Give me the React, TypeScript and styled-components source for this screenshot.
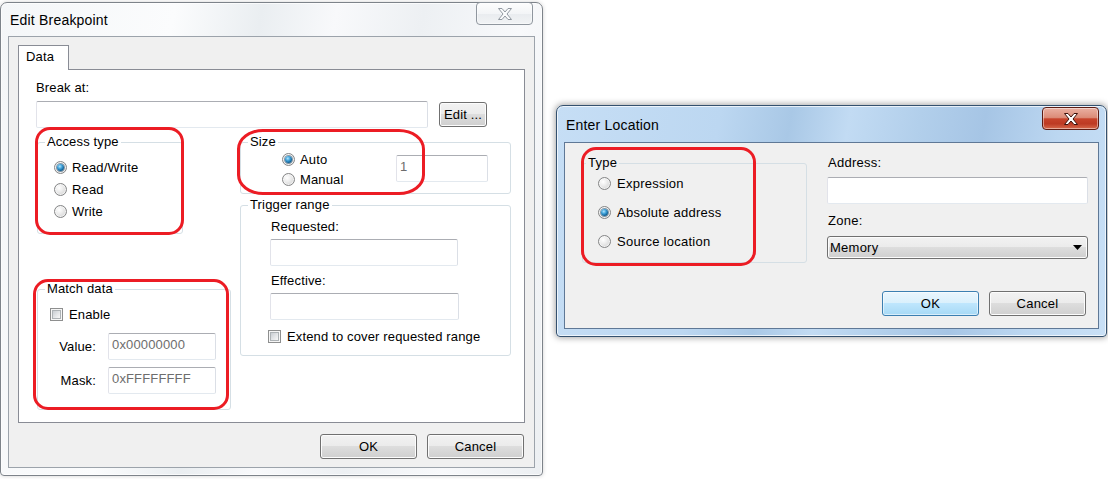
import React from "react";
import styled, { createGlobalStyle, css } from "styled-components";

const GlobalStyle = createGlobalStyle`
  html, body { margin: 0; padding: 0; background: #ffffff; }
  body { font-family: "Liberation Sans", Arial, sans-serif; font-size: 13px; color: #000; }
  * { box-sizing: border-box; }
`;

const Page = styled.div`
  display: flex;
  align-items: flex-start;
  gap: 13px;
  padding-top: 2px;
  width: 1108px;
  height: 479px;
  overflow: hidden;
`;

const Window = styled.section<{ $active?: boolean; $width: number; $height: number; $offsetTop?: number }>`
  width: ${(p) => p.$width}px;
  height: ${(p) => p.$height}px;
  margin-top: ${(p) => p.$offsetTop ?? 0}px;
  display: flex;
  flex-direction: column;
  padding: 0 7px 7px;
  border-radius: 7px 7px 4px 4px;
  border: 1px solid ${(p) => (p.$active ? "#34516f" : "#7d838a")};
  background: ${(p) =>
    p.$active
      ? "linear-gradient(100deg, #c6def5 0%, #bcd7f1 28%, #a9c8e6 40%, #c2dbf3 50%, #b2cfeb 62%, #a6c5e5 73%, #bcd7f1 86%, #c9e0f6 100%)"
      : "linear-gradient(100deg, #f4f6f8 0%, #fbfcfd 28%, #eaeef1 42%, #f8f9fb 54%, #edf0f3 68%, #f8f9fb 84%, #eceff2 100%)"};
  box-shadow: inset 0 0 0 1px rgba(255, 255, 255, 0.7),
    ${(p) => (p.$active ? "0 0 6px 1px rgba(0,0,0,0.35)" : "0 0 4px rgba(0,0,0,0.18)")};
`;

const TitleBar = styled.header<{ $height: number }>`
  height: ${(p) => p.$height}px;
  flex: none;
  display: flex;
  align-items: flex-start;
  justify-content: space-between;
`;

const TitleText = styled.span<{ $top: number }>`
  margin-top: ${(p) => p.$top}px;
  padding-left: 2px;
  font-size: 14px;
  line-height: 18px;
  letter-spacing: 0.2px;
  color: #000;
`;

const CloseButton = styled.div<{ $active?: boolean; $top: number; $right: number }>`
  width: 57px;
  height: 23px;
  margin-top: ${(p) => p.$top}px;
  margin-right: ${(p) => p.$right}px;
  display: flex;
  align-items: center;
  justify-content: center;
  border-radius: 4px;
  border: 1px solid ${(p) => (p.$active ? "#5e1c13" : "#8f969e")};
  background: ${(p) =>
    p.$active
      ? "linear-gradient(#eab0a2 0%, #dc8c78 45%, #c7432b 52%, #bd3a24 75%, #d76a4c 100%)"
      : "linear-gradient(#fdfdfd 0%, #f3f5f7 50%, #e9ecef 52%, #f1f3f5 100%)"};
  box-shadow: inset 0 0 0 1px rgba(255, 255, 255, 0.45);
`;

const XGlyph = ({ active }: { active?: boolean }) => (
  <svg width="16" height="14" viewBox="0 0 16 14">
    <path
      d="M1.5 1.5 H5 L8 5 L11 1.5 H14.5 L10 7 L14.5 12.5 H11 L8 9 L5 12.5 H1.5 L6 7 Z"
      fill={active ? "#ffffff" : "#fafbfc"}
      stroke={active ? "#3d120b" : "#9299a1"}
      strokeWidth="1"
      strokeLinejoin="round"
    />
  </svg>
);

const Client = styled.div<{ $active?: boolean; $tracking: number; $pad: string }>`
  flex: 1;
  min-height: 0;
  display: flex;
  flex-direction: column;
  background: #f0f0f0;
  border: 1px solid ${(p) => (p.$active ? "#5f7896" : "#9ca3ab")};
  padding: ${(p) => p.$pad};
  letter-spacing: ${(p) => p.$tracking}px;
`;

/* ---------- Tabs ---------- */
const TabStrip = styled.div`
  display: flex;
  height: 24px;
  flex: none;
  position: relative;
  z-index: 1;
`;

const Tab = styled.div`
  width: 51px;
  height: 25px;
  padding: 3px 0 0 7px;
  line-height: 16px;
  background: #ffffff;
  border: 1px solid #898c95;
  border-bottom: none;
`;

const TabPanel = styled.div`
  flex: 1;
  background: #ffffff;
  border: 1px solid #898c95;
  padding: 10px 14px 0 17px;
`;

/* ---------- Common controls ---------- */
const FieldLabel = styled.div<{ $gap?: number; $indent?: number }>`
  line-height: 16px;
  margin-bottom: ${(p) => p.$gap ?? 0}px;
  margin-left: ${(p) => p.$indent ?? 0}px;
  white-space: nowrap;
`;

const TextBox = styled.input<{ $w: number; $h?: number }>`
  display: block;
  width: ${(p) => p.$w}px;
  height: ${(p) => p.$h ?? 27}px;
  margin: 0;
  padding: 0 3px 4px;
  font: inherit;
  font-size: 13px;
  letter-spacing: inherit;
  color: #6d6d6d;
  background: #ffffff;
  border: 1px solid;
  border-color: #abadb3 #dbdfe6 #e3e9ef #e2e3ea;
  border-radius: 2px;
  outline: none;
`;

const PushButton = styled.button<{ $w: number; $h?: number; $default?: boolean }>`
  width: ${(p) => p.$w}px;
  height: ${(p) => p.$h ?? 25}px;
  margin: 0;
  padding: 0;
  font: inherit;
  font-size: 13px;
  letter-spacing: inherit;
  color: #000;
  border-radius: 3px;
  border: 1px solid ${(p) => (p.$default ? "#3c7fb1" : "#707070")};
  background: ${(p) =>
    p.$default
      ? "linear-gradient(#eaf6fd 0%, #d9f0fc 49%, #bee6fd 50%, #a7d9f5 100%)"
      : "linear-gradient(#f2f2f2 0%, #ebebeb 49%, #dddddd 50%, #cfcfcf 100%)"};
  box-shadow: inset 0 0 0 1px ${(p) => (p.$default ? "rgba(255,255,255,0.55)" : "#fcfcfc")};
`;

const ButtonRow = styled.div<{ $top: number; $right?: number }>`
  display: flex;
  justify-content: flex-end;
  gap: 10px;
  flex: none;
  margin-top: ${(p) => p.$top}px;
  margin-right: ${(p) => p.$right ?? 0}px;
`;

const Group = styled.fieldset<{ $w: number; $h: number }>`
  width: ${(p) => p.$w}px;
  height: ${(p) => p.$h}px;
  margin: 0;
  padding: 0;
  min-width: 0;
  border: 1px solid #d5dfe5;
  border-radius: 3px;
`;

const GroupTitle = styled.legend<{ $indent: number }>`
  margin-left: ${(p) => p.$indent}px;
  padding: 0 2px;
  line-height: 16px;
  font-size: 13px;
`;

const GroupBody = styled.div<{ $pad: string; $gap?: number }>`
  display: flex;
  flex-direction: column;
  padding: ${(p) => p.$pad};
  gap: ${(p) => p.$gap ?? 0}px;
`;

const Annotated = styled.div`
  position: relative;
  width: fit-content;
`;

const Highlight = styled.div<{ $t: number; $l: number; $r: number; $b: number; $radius: string }>`
  position: absolute;
  top: ${(p) => p.$t}px;
  left: ${(p) => p.$l}px;
  right: ${(p) => p.$r}px;
  bottom: ${(p) => p.$b}px;
  border: 3px solid #ec1c24;
  border-radius: ${(p) => p.$radius};
  pointer-events: none;
  z-index: 2;
`;

const Option = styled.div<{ $h: number; $gap?: number }>`
  display: flex;
  align-items: center;
  height: ${(p) => p.$h}px;
  gap: ${(p) => p.$gap ?? 5}px;
  white-space: nowrap;
`;

const RadioDot = styled.span<{ $checked?: boolean }>`
  flex: none;
  width: 13px;
  height: 13px;
  border-radius: 50%;
  border: 1px solid #848586;
  background: radial-gradient(circle at 38% 35%, #ffffff 0%, #eeeeee 35%, #cacaca 100%);
  box-shadow: inset 0 0 0 1px rgba(255, 255, 255, 0.6);
  display: inline-flex;
  align-items: center;
  justify-content: center;
  ${(p) =>
    p.$checked &&
    css`
      &::after {
        content: "";
        width: 7px;
        height: 7px;
        border-radius: 50%;
        background: radial-gradient(circle at 40% 35%, #b2e6fd 0%, #42a3da 35%, #0f5f94 70%, #0b3a5a 100%);
        box-shadow: 0 0 0 1px rgba(30, 70, 100, 0.5);
      }
    `}
`;

const CheckBox = styled.span<{ $shift?: number }>`
  flex: none;
  width: 13px;
  height: 13px;
  margin-left: ${(p) => p.$shift ?? 0}px;
  border: 1px solid #8e8f8f;
  background: #f6f6f6;
  padding: 1px;
  display: inline-flex;
  &::after {
    content: "";
    flex: 1;
    border: 1px solid #adb2b5;
    background: linear-gradient(135deg, #c9cdd2 0%, #e4e6e8 55%, #f7f7f7 100%);
  }
`;

/* ---------- Edit Breakpoint layout ---------- */
const BreakRow = styled.div`
  display: flex;
  align-items: center;
  gap: 11px;
`;

const Columns = styled.div`
  display: grid;
  grid-template-columns: 194px 271px;
  column-gap: 9px;
  margin-top: 6px;
  padding-left: 1px;
  align-items: start;
`;

const Column = styled.div`
  display: flex;
  flex-direction: column;
  align-items: flex-start;
`;

const Spacer = styled.div<{ $h: number }>`
  height: ${(p) => p.$h}px;
  flex: none;
`;

const SizeBody = styled.div`
  display: flex;
  align-items: flex-start;
  padding-left: 41px;
`;

const SizeOptions = styled.div`
  display: flex;
  flex-direction: column;
  gap: 2px;
  width: 114px;
`;

const SizeInputSlot = styled.div`
  margin-top: 5px;
`;

const ValueGrid = styled.div`
  display: grid;
  grid-template-columns: 47px 108px;
  column-gap: 11px;
  row-gap: 7px;
  align-items: center;
  margin-top: 12px;
`;

const GridLabel = styled.span`
  text-align: right;
  line-height: 16px;
  padding-right: 1px;
`;

/* ---------- Enter Location layout ---------- */
const LocationTop = styled.div`
  display: grid;
  grid-template-columns: 225px 261px;
  column-gap: 20px;
  align-items: start;
`;

const AddressColumn = styled.div`
  display: flex;
  flex-direction: column;
`;

const ComboBox = styled.div`
  width: 261px;
  height: 23px;
  display: flex;
  align-items: center;
  justify-content: space-between;
  padding: 0 5px 0 2px;
  border: 1px solid #707070;
  border-radius: 3px;
  background: linear-gradient(#f2f2f2 0%, #ebebeb 49%, #dddddd 50%, #cfcfcf 100%);
  box-shadow: inset 0 0 0 1px #fcfcfc;
  line-height: 16px;
`;

const Arrow = () => (
  <svg width="9" height="5" viewBox="0 0 9 5">
    <polygon points="0,0 9,0 4.5,5" fill="#000" />
  </svg>
);

export default function App() {
  return (
    <>
      <GlobalStyle />
      <Page>
        {/* Edit Breakpoint (inactive) */}
        <Window $width={543} $height={474}>
          <TitleBar $height={33}>
            <TitleText $top={8}>Edit Breakpoint</TitleText>
            <CloseButton $top={-1} $right={2}>
              <XGlyph />
            </CloseButton>
          </TitleBar>
          <Client $tracking={0.15} $pad="8px 9px 8px 9px">
            <TabStrip>
              <Tab>Data</Tab>
            </TabStrip>
            <TabPanel>
              <FieldLabel $gap={5}>Break at:</FieldLabel>
              <BreakRow>
                <TextBox $w={392} readOnly defaultValue="" />
                <PushButton $w={48}>Edit ...</PushButton>
              </BreakRow>
              <Columns>
                <Column>
                  <Annotated>
                    <Group $w={146} $h={100}>
                      <GroupTitle $indent={7}>Access type</GroupTitle>
                      <GroupBody $pad="6px 0 0 16px">
                        <Option $h={22}>
                          <RadioDot $checked />
                          Read/Write
                        </Option>
                        <Option $h={22}>
                          <RadioDot />
                          Read
                        </Option>
                        <Option $h={22}>
                          <RadioDot />
                          Write
                        </Option>
                      </GroupBody>
                    </Group>
                    <Highlight $t={-7} $l={-2} $r={-1} $b={-1} $radius="15px" />
                  </Annotated>
                  <Spacer $h={47} />
                  <Annotated>
                    <Group $w={194} $h={129}>
                      <GroupTitle $indent={7}>Match data</GroupTitle>
                      <GroupBody $pad="10px 0 0 12px">
                        <Option $h={14} $gap={6}>
                          <CheckBox />
                          Enable
                        </Option>
                        <ValueGrid>
                          <GridLabel>Value:</GridLabel>
                          <TextBox $w={108} readOnly defaultValue="0x00000000" />
                          <GridLabel>Mask:</GridLabel>
                          <TextBox $w={108} readOnly defaultValue="0xFFFFFFFF" />
                        </ValueGrid>
                      </GroupBody>
                    </Group>
                    <Highlight $t={-2} $l={-4} $r={2} $b={0} $radius="15px" />
                  </Annotated>
                </Column>
                <Column>
                  <Annotated>
                    <Group $w={271} $h={60}>
                      <GroupTitle $indent={7}>Size</GroupTitle>
                      <SizeBody>
                        <SizeOptions>
                          <Option $h={18}>
                            <RadioDot $checked />
                            Auto
                          </Option>
                          <Option $h={18}>
                            <RadioDot />
                            Manual
                          </Option>
                        </SizeOptions>
                        <SizeInputSlot>
                          <TextBox $w={92} readOnly defaultValue="1" />
                        </SizeInputSlot>
                      </SizeBody>
                    </Group>
                    <Highlight $t={-5} $l={-3} $r={86} $b={-1} $radius="26px / 20px" />
                  </Annotated>
                  <Spacer $h={3} />
                  <Group $w={271} $h={159}>
                    <GroupTitle $indent={7}>Trigger range</GroupTitle>
                    <GroupBody $pad="6px 0 0 29px">
                      <FieldLabel $gap={4} $indent={1}>
                        Requested:
                      </FieldLabel>
                      <TextBox $w={188} readOnly defaultValue="" />
                      <Spacer $h={7} />
                      <FieldLabel $gap={4} $indent={1}>
                        Effective:
                      </FieldLabel>
                      <TextBox $w={189} readOnly defaultValue="" />
                      <Spacer $h={9} />
                      <Option $h={14} $gap={6}>
                        <CheckBox $shift={-2} />
                        Extend to cover requested range
                      </Option>
                    </GroupBody>
                  </Group>
                </Column>
              </Columns>
            </TabPanel>
            <ButtonRow $top={11} $right={1}>
              <PushButton $w={97}>OK</PushButton>
              <PushButton $w={97}>Cancel</PushButton>
            </ButtonRow>
          </Client>
        </Window>

        {/* Enter Location (active) */}
        <Window $active $width={551} $height={232} $offsetTop={103}>
          <TitleBar $height={36}>
            <TitleText $top={10}>Enter Location</TitleText>
            <CloseButton $active $top={1} $right={0}>
              <XGlyph active />
            </CloseButton>
          </TitleBar>
          <Client $active $tracking={0.25} $pad="12px 12px 13px 17px">
            <LocationTop>
              <Annotated>
                <Group $w={225} $h={108}>
                  <GroupTitle $indent={3}>Type</GroupTitle>
                  <GroupBody $pad="1px 0 0 15px" $gap={7}>
                    <Option $h={22} $gap={6}>
                      <RadioDot />
                      Expression
                    </Option>
                    <Option $h={22} $gap={6}>
                      <RadioDot $checked />
                      Absolute address
                    </Option>
                    <Option $h={22} $gap={6}>
                      <RadioDot />
                      Source location
                    </Option>
                  </GroupBody>
                </Group>
                <Highlight $t={-8} $l={-1} $r={51} $b={-3} $radius="15px" />
              </Annotated>
              <AddressColumn>
                <FieldLabel $gap={6} $indent={1}>
                  Address:
                </FieldLabel>
                <TextBox $w={261} readOnly defaultValue="" />
                <Spacer $h={9} />
                <FieldLabel $gap={7} $indent={1}>
                  Zone:
                </FieldLabel>
                <ComboBox>
                  <span>Memory</span>
                  <Arrow />
                </ComboBox>
              </AddressColumn>
            </LocationTop>
            <ButtonRow $top={28}>
              <PushButton $w={97} $default>
                OK
              </PushButton>
              <PushButton $w={97}>Cancel</PushButton>
            </ButtonRow>
          </Client>
        </Window>
      </Page>
    </>
  );
}
